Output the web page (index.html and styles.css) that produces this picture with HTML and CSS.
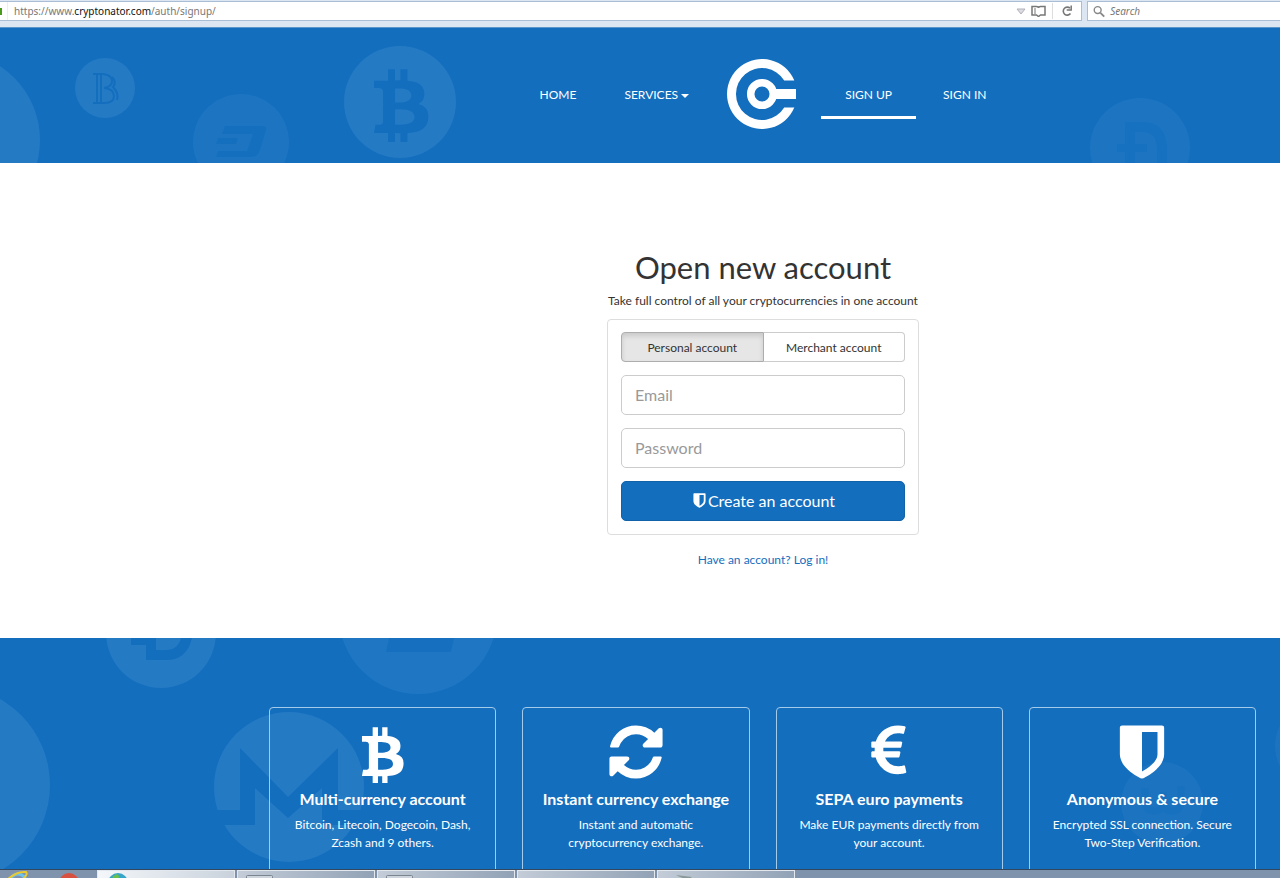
FILE: index.html
```html
<!DOCTYPE html>
<html lang="en">
<head>
	<meta charset="UTF-8">
	<meta name="viewport" content="width=device-width, initial-scale=1">
	<title>Cryptonator - Sign up</title>
	<link rel="stylesheet" href="styles.css">
</head>
<body>

	<!-- browser bar -->
	<div class="browser">
		<div class="address">
			<svg class="lock" width="2" height="10"><rect y="2" width="2" height="7" fill="#4a9a1c"/></svg>
			<span class="url">https://www.<b>cryptonator.com</b>/auth/signup/</span>
			<svg class="tri" width="10" height="7" viewBox="0 0 10 7"><path d="M1 1h8L5 6z" fill="#dcdce4" stroke="#b0b0bb"/></svg>
			<svg class="reader" width="15" height="12" viewBox="0 0 15 12" fill="none" stroke="#777" stroke-width="1.5"><path d="M1 1.500h4.500q2 0 2 1.500 0-1.500 2-1.500H14v8.500H9.500l-2 1.500-2-1.500H1z"/><path d="M3 4h2M3 6h2M3 8h2" stroke-width="1"/></svg>
			<span class="split"></span>
			<svg class="reload" width="12" height="12" viewBox="0 0 12 12" fill="none" stroke="#777" stroke-width="1.600"><path d="M9.500 8.500A4 4 0 1 1 9 3.200"/><path d="M10.200 0.500v4.500H5.700" stroke-width="1.500"/></svg>
		</div>
		<div class="searchbox">
			<svg width="13" height="13" viewBox="0 0 13 13" fill="none" stroke="#888"><circle cx="5" cy="5" r="3.700" stroke-width="1.500"/><path d="M8 8l4 4" stroke-width="2"/></svg>
			<input type="text" placeholder="Search" aria-label="Search">
		</div>
	</div>

	<header class="header">
		<svg class="coins" aria-hidden="true">
			<g class="disc">
				<circle cx="-48" cy="112" r="88"/>
				<circle cx="105" cy="60" r="30"/>
				<circle cx="241" cy="114" r="48" opacity=".6"/>
				<circle cx="400" cy="74" r="56"/>
				<circle cx="1140" cy="120" r="50" opacity=".6"/>
			</g>
			<g class="thin">
				<path d="M93 46h10q9 1 9 7t-8 7q10 1 10 8t-10 7H93M97 46v29M101 46v29M112 49q5 5 1 10 6 6 4 13"/>
			</g>
			<g class="mark">
				<path d="M225 98h38q4 0 3 4l-6 20q-2 7-9 7h-35l2-6h29l6-17h-31zM218 110h20l-2 6h-20z" opacity=".8"/>
				<path d="M1125 94h18q24 0 24 28v13h-10v-13q0-18-14-18h-8v12h12v8h-12v11h-10v-11h-8v-8h8z" opacity=".6"/>
			</g>
			<svg class="mark" x="361" y="33" width="81" height="81" viewBox="0 0 1792 1792"><use href="#btc"/></svg>
		</svg>

		<nav class="nav">
			<a href="#">HOME</a>
			<a href="#">SERVICES <i class="caret"></i></a>
			<a class="logo" href="#" aria-label="Cryptonator">
				<svg width="70" height="70" viewBox="0 0 70 70" fill="#fff">
					<path d="M67.300 21.500A35 35 0 1 0 67.300 48.500H57.200A26 26 0 1 1 57.200 21.500z"/>
					<circle cx="35" cy="35" r="11.300" fill="none" stroke="#fff" stroke-width="7.500"/>
					<path d="M47 30h22v10H47z"/>
				</svg>
			</a>
			<a class="active" href="#">SIGN UP</a>
			<a href="#">SIGN IN</a>
		</nav>
	</header>

	<main class="signup">
		<h1>Open new account</h1>
		<p>Take full control of all your cryptocurrencies in one account</p>
		<form class="panel">
			<div class="types">
				<button type="button" class="on">Personal account</button>
				<button type="button">Merchant account</button>
			</div>
			<input type="email" placeholder="Email" aria-label="Email">
			<input type="password" placeholder="Password" aria-label="Password">
			<button type="button" class="create"><svg width="17" height="17" viewBox="0 0 1792 1792"><use href="#shield"/></svg>Create an account</button>
		</form>
		<a class="login" href="#">Have an account? Log in!</a>
	</main>

	<section class="features">
		<svg class="coins" aria-hidden="true">
			<g class="disc">
				<circle cx="161" cy="-5" r="55"/>
				<circle cx="418" cy="-23" r="79" opacity=".7"/>
				<circle cx="-49" cy="147" r="99"/>
				<circle cx="289" cy="149" r="75"/>
				<circle cx="1162" cy="165" r="41" opacity=".5"/>
				<circle cx="1320" cy="108" r="45" opacity=".5"/>
			</g>
			<g class="mark">
				<path d="M131 0h25v12h10q12 0 15-12h11q-5 22-26 22h-20V7h-15z"/>
				<path d="M390-4h65l-4 18h-65z" opacity=".7"/>
				<path d="M240 110l48 49 50-49v62h25v15h-41v-37l-34 30-33-30v37h-38v-15h23z"/>
			</g>
			<path class="thick" d="M1145 150v12q0 11 9 11t9-11v-8M1163 162q0 11 9 11t9-11v-14" opacity=".5"/>
		</svg>

		<div class="cards">
			<article>
				<svg class="icon" viewBox="0 0 1792 1792"><path id="btc" d="M1399 695q18 182-131 258 117 28 175 103t45 214q-7 71-32.500 125t-64.500 89-97 58.500-121.500 34.500-145.500 15v255h-154v-251q-80 0-122-1v252h-154v-255q-18 0-54-.5t-55-.5h-200l31-183h111q50 0 58-51v-402h16q-6-1-16-1v-287q-13-68-89-68h-111v-164l212 1q64 0 97-1v-252h154v247q82-2 122-2v-245h154v252q79 7 140 22.500t113 45 82.500 78 36.500 114.500zm-215 545q0-36-15-64t-37-46-57.500-30.500-65.500-18.500-74-9-69-3-64.500 1-47.500 1v338q8 0 37 .5t48 .5 53-1.500 58.500-4 57-8.500 55.500-14 47.500-21 39.500-30 24.500-40 9.500-51zm-71-476q0-33-12.500-58.500t-30.500-42-48-28-55-16.500-61.500-8-58-2.500-54 1-39.500.5v307q5 0 34.500.5t46.500 0 50-2 55-5.500 51.500-11 48.500-18.500 37-27 27-38.500 9-51z"/></svg>
				<h2>Multi-currency account</h2>
				<p>Bitcoin, Litecoin, Dogecoin, Dash, Zcash and 9 others.</p>
			</article>
			<article>
				<svg class="icon" viewBox="0 0 1792 1792"><path d="M1639 1056q0 5-1 7-64 268-268 434.500t-478 166.500q-146 0-282.500-55t-243.500-157l-129 129q-19 19-45 19t-45-19-19-45v-448q0-26 19-45t45-19h448q26 0 45 19t19 45-19 45l-137 137q71 66 161 102t187 36q134 0 250-65t186-179q11-17 53-117 8-23 30-23h192q13 0 22.500 9.500t9.500 22.500zm25-800v448q0 26-19 45t-45 19h-448q-26 0-45-19t-19-45 19-45l138-138q-148-137-349-137-134 0-250 65t-186 179q-11 17-53 117-8 23-30 23h-199q-13 0-22.500-9.500t-9.500-22.500v-7q65-268 270-434.500t480-166.500q146 0 284 55.500t245 156.500l130-129q19-19 45-19t45 19 19 45z"/></svg>
				<h2>Instant currency exchange</h2>
				<p>Instant and automatic cryptocurrency exchange.</p>
			</article>
			<article>
				<svg class="icon" viewBox="0 0 1792 1792"><path d="M1360 1307l35 159q3 12-3 22.500t-17 14.500l-5 1q-4 2-10.500 3.500t-16 4.500-21.500 5.500-25.500 5-30 5-33.500 4.500-36.500 3-38.500 1q-234 0-409-130.500t-238-351.500h-95q-13 0-22.500-9.500t-9.500-22.500v-113q0-13 9.500-22.500t22.500-9.500h66q-2-57 1-105h-67q-14 0-23-9t-9-23v-114q0-14 9-23t23-9h98q67-210 243.500-338t400.500-128q102 0 194 23 11 3 20 15 6 11 3 24l-43 159q-3 13-14 19.500t-24 2.500l-4-1q-4-1-11.500-2.500l-17.500-3.500-22.500-3.500-26-3-29-2.500-29.500-1q-126 0-226 64t-150 176h468q16 0 25 12 10 12 7 26l-24 114q-5 26-32 26h-488q-3 37 0 105h459q15 0 25 12 9 12 6 27l-24 112q-2 11-11 18.500t-20 7.500h-387q48 117 149.500 185.500t228.500 68.500q18 0 36-1.500t33.500-3.500 29.500-4.500 24.500-5 18.500-4.500l12-3 5-2q13-5 26 2 12 7 15 21z"/></svg>
				<h2>SEPA euro payments</h2>
				<p>Make EUR payments directly from your account.</p>
			</article>
			<article>
				<svg class="icon" viewBox="0 0 1792 1792"><path id="shield" d="M1344 960v-640h-448v1137q119-63 213-137 235-184 235-360zm192-768v768q0 86-33.500 170.500t-83 150-118 127.500-126.500 103-121 77.500-89.500 49.500-42.500 20q-12 6-26 6t-26-6q-16-7-42.500-20t-89.500-49.500-121-77.500-126.500-103-118-127.500-83-150-33.500-170.500v-768q0-26 19-45t45-19h1152q26 0 45 19t19 45z"/></svg>
				<h2>Anonymous &amp; secure</h2>
				<p>Encrypted SSL connection. Secure Two-Step Verification.</p>
			</article>
		</div>
	</section>

	<!-- taskbar -->
	<footer class="taskbar">
		<div class="pinned">
			<svg width="95" height="8" fill="none">
				<circle cx="18" cy="12" r="8" stroke="#6cc5ee" stroke-width="3"/>
				<path d="M8 9Q17 1 26 2q2 2-2 6" stroke="#ecc92e" stroke-width="2"/>
				<circle cx="69" cy="13" r="10" fill="#d8503f"/>
			</svg>
		</div>
		<div class="task bright"><svg width="24" height="8"><circle cx="12" cy="12" r="10" fill="#35a5c9"/><path d="M6 6l5-3 3 3-4 2z" fill="#6cc04a"/></svg></div>
		<div class="task"><svg width="28" height="8"><rect x=".5" y="4.500" width="26" height="8" rx="1" fill="#cdd4dc" stroke="#7b8590"/></svg></div>
		<div class="task"><svg width="28" height="8"><rect x=".5" y="4.500" width="26" height="8" rx="1" fill="#cdd4dc" stroke="#7b8590"/></svg></div>
		<div class="task"></div>
		<div class="task"><svg width="34" height="8"><path d="M10 4l16 2-4 3-8-3z" fill="#8b9a98"/></svg></div>
	</footer>

</body>
</html>
```

FILE: styles.css
```css
*{
	box-sizing:border-box;
}
body{
	margin:0;
	height:100vh;
	display:flex;
	flex-direction:column;
	overflow:hidden;
	background-color:#fff;
	color:#333;
	font-family:Lato, sans-serif;
	font-size:12px;
	line-height:18px;
}
h1, h2, p{
	margin:0;
}
a{
	text-decoration:none;
}
button, input{
	font-family:inherit;
}

/* browser bar */
.browser{
	display:flex;
	flex:none;
	gap:5px;
	height:28px;
	padding:1px 0 6px;
	background-color:#dbe6f2;
	border-bottom:1px solid #5a94c8;
	font-family:"Noto Sans", sans-serif;
	font-size:10px;
}
.address, .searchbox{
	display:flex;
	align-items:center;
	background-color:#fff;
	border:1px solid #a9bdd4;
}
.address{
	flex:1;
	border-left:0;
	padding-right:8px;
}
.url{
	flex:1;
	margin-left:5px;
	padding-left:6px;
	border-left:1px solid #eee;
	color:#777;
}
.url b{
	font-weight:normal;
	color:#111;
}
.reader{
	margin-left:5px;
}
.split{
	width:1px;
	height:16px;
	margin:0 8px 0 6px;
	background-color:#ddd;
}
.searchbox{
	width:193px;
	padding-left:5px;
	border-right:0;
}
.searchbox input{
	width:100%;
	border:0;
	padding:0 0 0 5px;
	font-size:10px;
	font-style:italic;
}
.searchbox input::placeholder{
	color:#777;
}

/* blue areas with coins */
.header, .features{
	position:relative;
	background-color:#136ebe;
	padding-left:246px;
}
.coins{
	position:absolute;
	left:0;
	top:0;
	width:100%;
	height:100%;
}
.disc{
	fill:#257ac4;
}
.mark{
	fill:#136ebe;
}
.thin, .thick{
	fill:none;
	stroke:#136ebe;
	stroke-width:2;
}
.thick{
	stroke-width:7;
}

.header{
	flex:none;
	height:135px;
}
.nav{
	position:relative;
	display:flex;
	justify-content:center;
	align-items:center;
	height:100%;
}
.nav a{
	padding:14px 24px 12px;
	border-bottom:3px solid transparent;
	color:#fff;
}
.nav .active{
	border-color:#fff;
	margin-right:3px;
}
.nav .logo{
	display:flex;
	padding:0 24px 3px 14px;
	border:0;
}
.caret{
	display:inline-block;
	border:4px solid transparent;
	border-top-color:#fff;
	border-bottom:0;
	vertical-align:middle;
}

/* sign up form */
.signup{
	flex:none;
	display:flex;
	flex-direction:column;
	align-items:center;
	height:475px;
	padding:85px 0 0 246px;
}
.signup h1{
	font-size:31px;
	font-weight:normal;
	line-height:38px;
	margin-bottom:6px;
}
.panel{
	display:flex;
	flex-direction:column;
	gap:13px;
	width:312px;
	margin:9px 0 16px;
	padding:12px 13px 13px;
	border:1px solid #ddd;
	border-radius:4px;
}
.types{
	display:flex;
}
.types button{
	flex:1;
	height:30px;
	border:1px solid #ccc;
	border-radius:0 4px 4px 0;
	background-color:#fff;
	color:#333;
	font-size:12px;
}
.types button + button{
	border-left:0;
}
.types .on{
	border-color:#adadad;
	border-radius:4px 0 0 4px;
	background-color:#e6e6e6;
	box-shadow:inset 0 3px 5px rgba(0,0,0,.125);
}
.panel input{
	height:40px;
	padding:0 13px 2px;
	border:1px solid #ccc;
	border-radius:5px;
	font-size:16px;
}
.panel input::placeholder{
	color:#999;
}
.create{
	display:flex;
	align-items:center;
	justify-content:center;
	height:40px;
	padding-bottom:3px;
	border:1px solid #1162a9;
	border-radius:5px;
	background-color:#136ebe;
	color:#fff;
	font-size:16px;
}
.create svg{
	fill:#fff;
}
.login{
	color:#136ebe;
}

/* features */
.features{
	flex:1;
	min-height:0;
	overflow:hidden;
	padding:69px 24px 0 269px;
}
.cards{
	position:relative;
	display:grid;
	grid-template-columns:repeat(4, 1fr);
	gap:26px;
}
.cards article{
	padding:13px 20px 40px;
	border:1px solid #a5cbea;
	border-radius:4px;
	color:#fff;
	text-align:center;
}
.icon{
	display:block;
	width:62px;
	height:62px;
	margin:0 auto 6px;
	fill:#fff;
}
.cards h2{
	font-size:16px;
	line-height:20px;
	margin:0 -10px 7px;
}

/* taskbar */
.taskbar{
	display:flex;
	flex:none;
	gap:2px;
	height:9px;
	background-color:#7f93ad;
	border-top:1px solid #33485e;
}
.pinned{
	width:95px;
}
.task{
	width:138px;
	padding-left:8px;
	border:1px solid #e3e8ee;
	border-bottom:0;
	background:linear-gradient(to right, #c3ccd7, #92a2b6);
}
.bright{
	background:linear-gradient(to right, #f4f7fa, #c9d2dc);
}
.taskbar svg{
	display:block;
}
```
